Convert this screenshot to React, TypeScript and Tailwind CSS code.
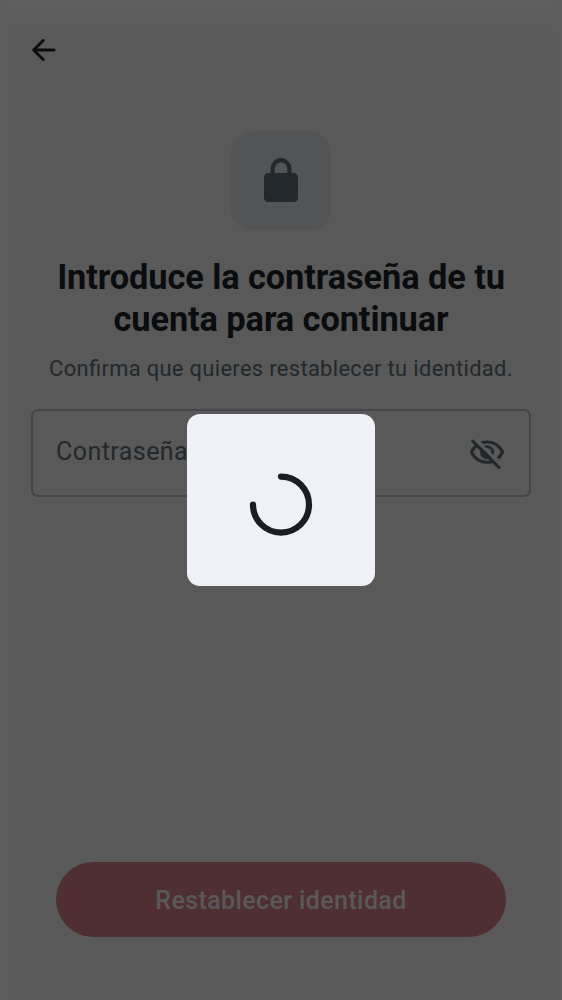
function BackIcon() {
  return (
    <svg width="38" height="38" viewBox="0 0 38 38" fill="none" stroke="#0b0d0f" strokeWidth="3" strokeLinecap="round" strokeLinejoin="round" aria-hidden="true">
      <path d="M29 19H9M18.200 9.500 8.700 19l9.500 9.500" />
    </svg>
  );
}

function LockIcon() {
  return (
    <svg width="50" height="50" viewBox="0 0 50 50" aria-hidden="true">
      <path d="M16.600 19.500V12.600a8.400 8.400 0 0 1 16.800 0v6.900" fill="none" stroke="#22282b" strokeWidth="4.200" />
      <rect x="8" y="17" width="34" height="29" rx="4.200" fill="#22282b" />
    </svg>
  );
}

function EyeOffIcon() {
  return (
    <svg width="38" height="38" viewBox="0 0 38 38" fill="none" aria-hidden="true">
      <mask id="outline-gap" maskUnits="userSpaceOnUse" x="0" y="0" width="38" height="38">
        <rect width="38" height="38" fill="white" />
        <path d="M-2.500 0H5.200L38 32.800V40.500Z" fill="black" />
      </mask>
      <mask id="pupil-gap" maskUnits="userSpaceOnUse" x="0" y="0" width="38" height="38">
        <path d="M4.200 0H38V33.800Z" fill="white" />
      </mask>
      <mask id="pupil-solid" maskUnits="userSpaceOnUse" x="0" y="0" width="38" height="38">
        <path d="M0 0 38 38H0Z" fill="white" />
      </mask>
      <path mask="url(#outline-gap)" d="M4 19.300C3.400 18.500 3.400 17.700 4 16.900 7.300 11.200 12.600 8 19 8s11.700 3.200 15 8.900c.6.8.6 1.600 0 2.400C30.700 25.200 25.400 28.400 19 28.400S7.300 25.200 4 19.300Z" stroke="#22282b" strokeWidth="3.200" strokeLinejoin="round" />
      <circle mask="url(#pupil-solid)" cx="19" cy="18.300" r="7" fill="#22282b" />
      <circle mask="url(#pupil-gap)" cx="19" cy="18.300" r="5.600" stroke="#22282b" strokeWidth="2.800" />
      <path d="m4.700 7.200 26.300 26.300" stroke="#22282b" strokeWidth="3.100" strokeLinecap="round" />
    </svg>
  );
}

function Spinner() {
  return (
    <svg width="64" height="64" viewBox="0 0 64 64" fill="none" role="status">
      <path d="M32 4.600A28 28 0 1 1 4 32.600" stroke="#1b1d22" strokeWidth="6.200" strokeLinecap="round" />
    </svg>
  );
}

export default function App() {
  return (
    <div className="relative h-[1000px] w-[562px] overflow-hidden bg-[#595959] font-['Roboto','Noto_Sans',sans-serif]">
      <div className="absolute inset-x-0 top-0 h-10 bg-linear-to-b from-[#606060] to-[#595959]" />
      <div className="absolute inset-y-0 left-0 w-6 bg-linear-to-r from-[#5d5d5d] to-[#59595900]" />
      <div className="absolute inset-y-0 right-0 w-6 bg-linear-to-l from-[#5d5d5d] to-[#59595900]" />
      <main className="relative flex h-full flex-col">
        <header className="flex h-[131px] items-start pt-[31px] pl-[25px]">
          <button aria-label="Volver" className="block"><BackIcon /></button>
        </header>
        <div className="mx-auto flex size-[100px] shrink-0 items-center justify-center rounded-[22px] bg-[#535456]">
          <LockIcon />
        </div>
        <h1 className="mt-[25px] text-center text-[34.375px] leading-[42px] font-bold tracking-[-0.090px] whitespace-nowrap text-[#0a0c0e]">
          Introduce la contraseña de tu<br />cuenta para continuar
        </h1>
        <p className="mt-[13px] text-center text-[21.875px] leading-[31px] tracking-[0.350px] whitespace-nowrap text-[#22282b] [font-feature-settings:'liga'_1]">
          Confirma que quieres restablecer tu identidad.
        </p>
        <div className="mx-[31px] mt-[25px] flex h-[88px] shrink-0 items-center justify-between rounded-[7px] border-2 border-[#45464b] pr-[23px] pl-[23px]">
          <span className="pb-[2px] text-[25px] tracking-[0.450px] text-[#22282b]">Contraseña</span>
          <EyeOffIcon />
        </div>
        <button className="mx-[56px] mt-auto mb-[62.600px] flex h-[75px] shrink-0 items-center justify-center rounded-full bg-[#502f32] pt-[2px] text-[25px] font-medium tracking-[0.390px] text-[#595959]">
          Restablecer identidad
        </button>
      </main>
      <div role="dialog" aria-label="Cargando" className="absolute top-[414px] left-[187px] flex h-[172px] w-[188px] items-center justify-center rounded-[13px] bg-[#f0f1f6] pt-[8px]">
        <Spinner />
      </div>
    </div>
  );
}
